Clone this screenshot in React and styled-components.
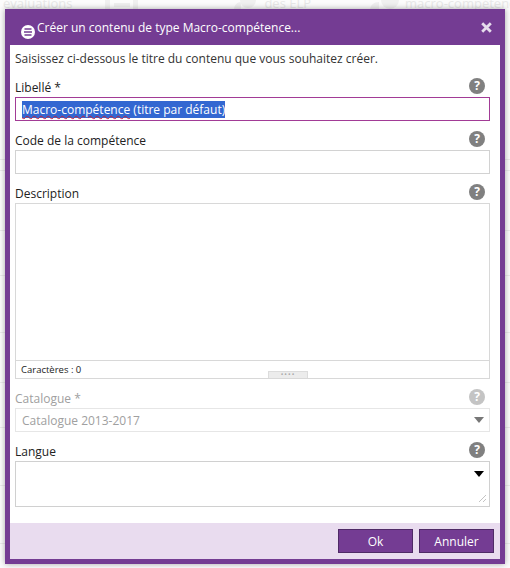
import React from "react";
import styled, { createGlobalStyle } from "styled-components";

const GlobalStyle = createGlobalStyle`
  html, body {
    margin: 0;
    padding: 0;
    background: #fff;
  }
  body {
    font-family: "Open Sans", "Liberation Sans", sans-serif;
    overflow: hidden;
  }
`;

const Page = styled.div`
  position: relative;
  width: 510px;
  height: 568px;
  overflow: hidden;
  background: #fcfcfc;
`;

const BackTabs = styled.div`
  display: flex;
  align-items: flex-end;
  height: 10px;
  overflow: hidden;
  color: #e8e8e8;
  font-size: 13px;
  line-height: 13px;
  padding-left: 3px;
  white-space: nowrap;
`;

const BackTab = styled.span`
  flex: none;
  margin-left: ${(p) => p.$gap || 0}px;
`;

const BackGlyph = styled.svg`
  flex: none;
  margin-left: ${(p) => p.$gap}px;
  width: ${(p) => p.$width}px;
  height: 10px;
`;

const BackRows = styled.div`
  display: flex;
  flex-direction: column;
`;

const BackRow = styled.div`
  box-sizing: border-box;
  height: ${(p) => p.$height}px;
  border-bottom: 1px solid #ececec;
`;

const Dialog = styled.div`
  position: absolute;
  left: 5px;
  top: 9px;
  width: 500px;
  height: 555px;
  display: flex;
  flex-direction: column;
  box-sizing: border-box;
  background: #743c93;
  padding: 0 5px 5px;
  box-shadow: 0 0 6px rgba(0, 0, 0, 0.35);
`;

const Header = styled.div`
  height: 36px;
  flex: none;
  display: flex;
  align-items: center;
  color: #fff;
  font-size: 12px;
  padding: 0 8px 0 11px;
`;

const MenuIcon = styled.svg`
  width: 14px;
  height: 14px;
  flex: none;
  margin: 10px 2px 0 0;
`;

const Title = styled.div`
  flex: 1;
`;

const CloseIcon = styled.svg`
  width: 11px;
  height: 11px;
  flex: none;
`;

const Body = styled.div`
  flex: 1;
  display: flex;
  flex-direction: column;
  background: #fff;
  padding: 0 10px 0 5px;
`;

const Intro = styled.div`
  font-size: 12px;
  line-height: 16px;
  color: #333;
  margin-top: 6px;
  height: 17px;
`;

const FieldHead = styled.div`
  display: flex;
  justify-content: space-between;
  align-items: center;
  height: 20px;
  margin-top: 9px;
  font-size: 12px;
  color: ${(p) => (p.$disabled ? "#a0a0a0" : "#222")};
`;

const Help = styled.span`
  width: 16px;
  height: 16px;
  border-radius: 50%;
  background: ${(p) => (p.$disabled ? "#c4c4c4" : "#808080")};
  color: #fff;
  font-size: 12px;
  font-weight: 700;
  line-height: 16px;
  text-align: center;
  margin: -2px 5px 0 0;
`;

const Input = styled.div`
  box-sizing: border-box;
  height: ${(p) => p.$height}px;
  border: 1px solid ${(p) => p.$border || "#d2d2d2"};
  font-size: 12px;
  padding-left: 6px;
  display: flex;
  align-items: center;
  justify-content: space-between;
  color: ${(p) => (p.$disabled ? "#a0a0a0" : "#222")};
`;

const Selected = styled.span`
  background: #3367d1;
  color: #fff;
  line-height: 17px;
`;

const Misspelled = styled.span`
  text-decoration: underline wavy #c2203a 1px;
  text-underline-offset: 1px;
`;

const TextArea = styled.div`
  box-sizing: border-box;
  height: 176px;
  border: 1px solid #d8d8d8;
  display: flex;
  flex-direction: column;
`;

const TextAreaSpace = styled.div`
  flex: 1;
`;

const CountBar = styled.div`
  position: relative;
  height: 17px;
  flex: none;
  border-top: 1px solid #d8d8d8;
  font-size: 9.5px;
  line-height: 17px;
  padding-left: 5px;
  color: #1a1a1a;
`;

const Grip = styled.div`
  position: absolute;
  left: 252px;
  bottom: 0;
  width: 40px;
  height: 7px;
  box-sizing: border-box;
  background: #ececec;
  border: 1px solid #dcdcdc;
  border-bottom: 0;
  color: #aaa;
  font-size: 7px;
  line-height: 5px;
  text-align: center;
  letter-spacing: 1px;
`;

const Caret = styled.span`
  width: 0;
  height: 0;
  border-left: 5.5px solid transparent;
  border-right: 5.5px solid transparent;
  border-top: 6px solid ${(p) => p.$color};
  margin-right: 5px;
`;

const LangBox = styled.div`
  box-sizing: border-box;
  position: relative;
  height: 46px;
  border: 1px solid #d0d0d0;
`;

const LangCaret = styled(Caret)`
  position: absolute;
  right: 0;
  top: 9px;
`;

const Resize = styled.svg`
  position: absolute;
  right: 2px;
  bottom: 3px;
  width: 9px;
  height: 9px;
`;

const Footer = styled.div`
  height: 36px;
  flex: none;
  display: flex;
  justify-content: flex-end;
  align-items: center;
  gap: 6px;
  padding-right: 6px;
  background: #e9dcef;
`;

const Button = styled.button`
  width: 75px;
  height: 24px;
  box-sizing: border-box;
  padding: 0;
  background: #743c93;
  border: 1px solid #4f2a66;
  color: #fff;
  font-family: inherit;
  font-size: 12px;
`;

const HelpRow = ({ label, disabled }) => (
  <FieldHead $disabled={disabled}>
    <span>{label}</span>
    <Help $disabled={disabled}>?</Help>
  </FieldHead>
);

const rowHeights = [150, 11, 60, 45, 57, 50, 45, 58, 58];

export default function App() {
  return (
    <Page>
      <GlobalStyle />
      <BackTabs>
        <BackTab>évaluations</BackTab>
        <BackGlyph $gap={33} $width={33} viewBox="0 0 33 10">
          <path d="M0 0h5v10H0zM28 0h5v10h-5zM9 3h16v4H9z" fill="#f0f0f0" />
        </BackGlyph>
        <BackGlyph $gap={96} $width={26} viewBox="0 0 26 10">
          <circle cx="14" cy="0" r="8" fill="#f0f0f0" />
          <path d="M0 10c0-5 3-8 7-8v8z" fill="#f0f0f0" />
        </BackGlyph>
        <BackTab $gap={4}>des ELP</BackTab>
        <BackGlyph $gap={59} $width={32} viewBox="0 0 32 10">
          <circle cx="20" cy="0" r="9" fill="#f0f0f0" />
          <path d="M0 10c0-5 4-8 9-8v8z" fill="#f0f0f0" />
        </BackGlyph>
        <BackTab $gap={3}>macro-compétences</BackTab>
      </BackTabs>
      <BackRows>
        {rowHeights.map((height, i) => (
          <BackRow key={i} $height={height} />
        ))}
      </BackRows>
      <Dialog>
        <Header>
          <MenuIcon viewBox="0 0 14 14">
            <circle cx="7" cy="7" r="7" fill="#fff" />
            <path d="M3.5 4h7M3 7h8M3.5 10h7" stroke="#743c93" strokeWidth="1.7" />
          </MenuIcon>
          <Title>Créer un contenu de type Macro-compétence...</Title>
          <CloseIcon viewBox="0 0 11 11">
            <path d="M1.2 1.2l8.6 8.6M9.8 1.2l-8.6 8.6" stroke="#e6dcec" strokeWidth="2.8" />
          </CloseIcon>
        </Header>
        <Body>
          <Intro>Saisissez ci-dessous le titre du contenu que vous souhaitez créer.</Intro>
          <HelpRow label="Libellé *" />
          <Input $height={24} $border="#a23b96">
            <Selected>
              <Misspelled>Macro-compétence</Misspelled> (titre par défaut)
            </Selected>
          </Input>
          <HelpRow label="Code de la compétence" />
          <Input $height={24} />
          <HelpRow label="Description" />
          <TextArea>
            <TextAreaSpace />
            <CountBar>
              Caractères : 0
              <Grip>••••</Grip>
            </CountBar>
          </TextArea>
          <HelpRow label="Catalogue *" disabled />
          <Input $height={24} $border="#e6e6e6" $disabled>
            Catalogue 2013-2017
            <Caret $color="#777" />
          </Input>
          <HelpRow label="Langue" />
          <LangBox>
            <LangCaret $color="#000" />
            <Resize viewBox="0 0 9 9">
              <path d="M1 8l7-7M5 8l3-3" stroke="#c4c4c4" strokeWidth="1" />
            </Resize>
          </LangBox>
        </Body>
        <Footer>
          <Button>Ok</Button>
          <Button>Annuler</Button>
        </Footer>
      </Dialog>
    </Page>
  );
}
